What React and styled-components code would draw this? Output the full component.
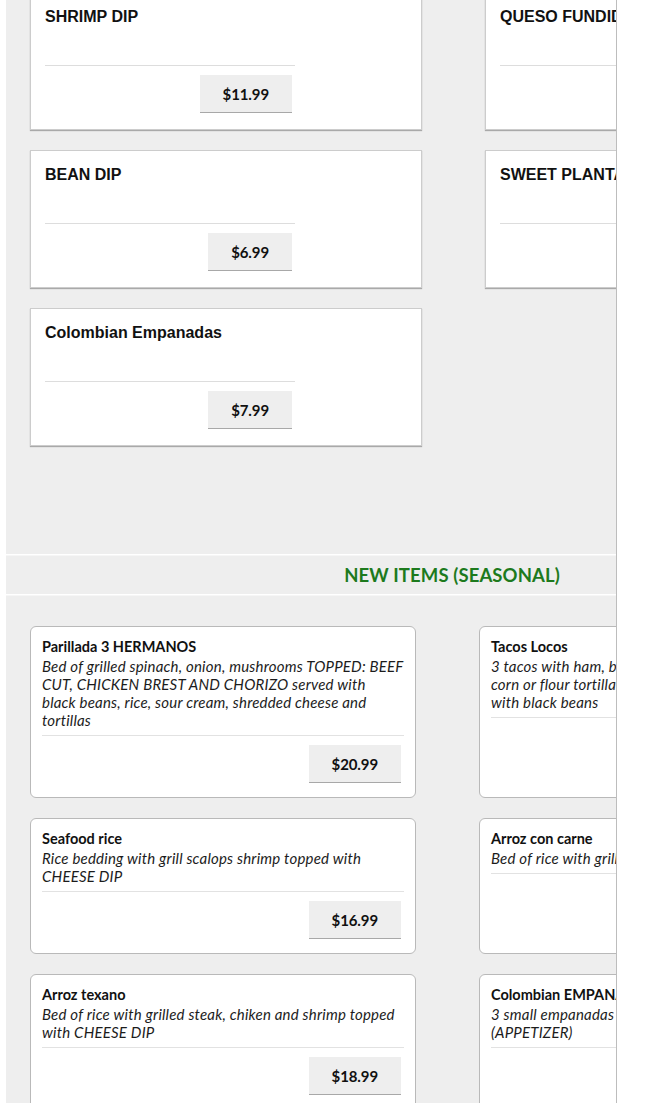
import React from "react";
import styled, { createGlobalStyle } from "styled-components";

const GlobalStyle = createGlobalStyle`
  html, body {
    margin: 0;
    padding: 0;
    background: #fff;
    overflow: hidden;
  }
`;

const Page = styled.div`
  margin-left: 6px;
  width: 610px;
  height: 1103px;
  background: #eeeeee;
  border-right: 1px solid #bdbdbd;
  overflow: hidden;
`;

// the real menu is wider than the frame, so it gets clipped on the right
const Content = styled.div`
  width: 892px;
  margin-top: -8px;
`;

const ClassicGrid = styled.div`
  display: grid;
  grid-template-columns: 392px 392px;
  column-gap: 63px;
  row-gap: 20px;
  padding-left: 24px;
  align-items: start;
`;

const ClassicCard = styled.div`
  box-sizing: border-box;
  height: 138px;
  background: #fff;
  border: 1px solid #cccccc;
  box-shadow: 0 1px 1px #a9a9a9;
  padding: 15px 14px 16px;
`;

const ClassicTitle = styled.h3`
  margin: 0 0 39px;
  font-family: "Liberation Sans", Arial, sans-serif;
  font-size: 16px;
  font-weight: 700;
  line-height: 18px;
  color: #111;
  white-space: nowrap;
`;

const ClassicBody = styled.div`
  width: 250px;
  border-top: 1px solid #dddddd;
  display: flex;
  justify-content: flex-end;
  padding-top: 9px;
`;

const PriceButton = styled.div`
  box-sizing: border-box;
  height: 38px;
  padding: 0 23px;
  margin-right: ${(p) => p.$gap}px;
  background: #eeeeee;
  border-bottom: 1px solid #a8a8a8;
  font-family: Lato, "Liberation Sans", sans-serif;
  font-weight: 700;
  font-size: 15px;
  letter-spacing: -0.1px;
  line-height: 38px;
  color: #111;
`;

const SectionHeader = styled.div`
  margin-top: 108px;
  height: 39px;
  border-top: 1px solid #fff;
  border-bottom: 1px solid #fff;
  box-shadow: inset 0 1px 0 #f6f6f6, 0 1px 0 #f6f6f6;
  display: flex;
  align-items: center;
  justify-content: center;
`;

const SectionTitle = styled.h2`
  margin: 0;
  font-family: Lato, "Liberation Sans", sans-serif;
  font-weight: 700;
  font-size: 18.5px;
  color: #1d7a1d;
  letter-spacing: 0.1px;
`;

const SeasonalGrid = styled.div`
  display: grid;
  grid-template-columns: 386px 386px;
  column-gap: 63px;
  row-gap: 20px;
  padding: 31px 0 0 24px;
`;

const SeasonalCard = styled.div`
  background: #fff;
  border: 1px solid #b9b9b9;
  border-radius: 6px;
  padding: 10px 11px 14px;
  font-family: Lato, "Liberation Sans", sans-serif;
`;

const ItemName = styled.div`
  font-size: 14.5px;
  font-weight: 700;
  line-height: 20px;
  color: #111;
  white-space: nowrap;
`;

const ItemDesc = styled.div`
  font-size: 15px;
  font-style: italic;
  letter-spacing: 0.2px;
  line-height: 18px;
  color: #1c1c1c;
  white-space: pre;
  padding-bottom: 6px;
  border-bottom: 1px solid #e2e2e2;
`;

const PriceRow = styled.div`
  display: flex;
  justify-content: flex-end;
  padding-top: 9px;
`;

const classics = [
  { name: "SHRIMP DIP", price: "$11.99" },
  { name: "QUESO FUNDIDO", price: "$8.99" },
  { name: "BEAN DIP", price: "$6.99" },
  { name: "SWEET PLANTAINS", price: "$5.99" },
  { name: "Colombian Empanadas", price: "$7.99" },
];

const seasonal = [
  {
    name: "Parillada 3 HERMANOS",
    desc: [
      "Bed of grilled spinach, onion, mushrooms TOPPED: BEEF",
      "CUT, CHICKEN BREST AND CHORIZO served with",
      "black beans, rice, sour cream, shredded cheese and",
      "tortillas",
    ],
    price: "$20.99",
  },
  {
    name: "Tacos Locos",
    desc: [
      "3 tacos with ham, beef and chorizo served on your",
      "corn or flour tortilla, onion, cilantro and salsa,",
      "with black beans",
    ],
    price: "$14.99",
  },
  {
    name: "Seafood rice",
    desc: ["Rice bedding with grill scalops shrimp topped with", "CHEESE DIP"],
    price: "$16.99",
  },
  {
    name: "Arroz con carne",
    desc: ["Bed of rice with grilled steak and onions"],
    price: "$15.99",
  },
  {
    name: "Arroz texano",
    desc: [
      "Bed of rice with grilled steak, chiken and shrimp topped",
      "with CHEESE DIP",
    ],
    price: "$18.99",
  },
  {
    name: "Colombian EMPANADAS",
    desc: ["3 small empanadas of beef and potato with salsa", "(APPETIZER)"],
    price: "$7.99",
  },
];

const App = () => {
  return (
    <>
      <GlobalStyle />
      <Page>
        <Content>
          <ClassicGrid>
            {classics.map((item) => (
              <ClassicCard key={item.name}>
                <ClassicTitle>{item.name}</ClassicTitle>
                <ClassicBody>
                  <PriceButton $gap={3}>{item.price}</PriceButton>
                </ClassicBody>
              </ClassicCard>
            ))}
          </ClassicGrid>

          <SectionHeader>
            <SectionTitle>NEW ITEMS (SEASONAL)</SectionTitle>
          </SectionHeader>

          <SeasonalGrid>
            {seasonal.map((item) => (
              <SeasonalCard key={item.name}>
                <ItemName>{item.name}</ItemName>
                <ItemDesc>{item.desc.join("\n")}</ItemDesc>
                <PriceRow>
                  <PriceButton $gap={3}>{item.price}</PriceButton>
                </PriceRow>
              </SeasonalCard>
            ))}
          </SeasonalGrid>
        </Content>
      </Page>
    </>
  );
};

export default App;
